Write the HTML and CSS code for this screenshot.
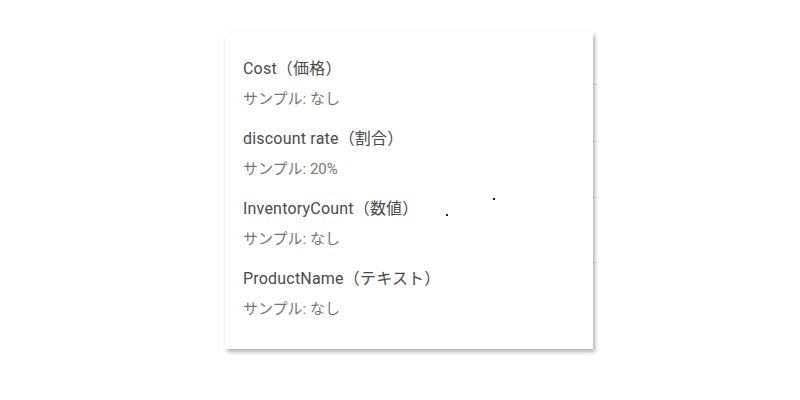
FILE: index.html
```html
<!DOCTYPE html>
<html lang="ja">
<head>
<meta charset="utf-8">
<link rel="stylesheet" href="styles.css">
</head>
<body>
<div class="page">
  <div class="bg-list">
    <div class="bg-row r1"></div>
    <div class="bg-row r2"></div>
    <div class="bg-row r3"></div>
    <div class="bg-row r4"></div>
  </div>
  <div class="menu">
    <div class="item">
      <div class="title">Cost（価格）</div>
      <div class="sub">サンプル: なし</div>
    </div>
    <div class="item">
      <div class="title">discount rate（割合）</div>
      <div class="sub">サンプル: 20%</div>
    </div>
    <div class="item">
      <div class="title">InventoryCount（数値）</div>
      <div class="sub">サンプル: なし</div>
    </div>
    <div class="item">
      <div class="title">ProductName（テキスト）</div>
      <div class="sub">サンプル: なし</div>
    </div>
    <span class="speck s1"></span>
    <span class="speck s2"></span>
  </div>
</div>
</body>
</html>
```

FILE: styles.css
```css
* { box-sizing: border-box; }
html, body {
  margin: 0;
  padding: 0;
  background: #ffffff;
  font-family: Roboto, "Noto Sans CJK JP", sans-serif;
}
.page {
  position: relative;
  width: 800px;
  height: 400px;
  padding-top: 32px;
}
.bg-list {
  margin-left: 250px;
  width: 347px;
}
.bg-row { border-bottom: 1px solid #e0e0e0; }
.r1 { height: 53px; }
.r2 { height: 57px; }
.r3 { height: 56px; }
.r4 { height: 65px; }
.menu {
  position: absolute;
  top: 32px;
  left: 225px;
  width: 368px;
  padding: 16px 18px 21px;
  background: #ffffff;
  box-shadow: 2px 3px 4px rgba(0, 0, 0, 0.3);
}
.item {
  padding: 9px 0;
}
.title {
  font-size: 16px;
  line-height: 24px;
  letter-spacing: 0.2px;
  color: #4a4a4a;
  white-space: nowrap;
}
.sub {
  margin-top: 8px;
  font-size: 15px;
  line-height: 20px;
  color: #767676;
  white-space: nowrap;
}
.speck {
  position: absolute;
  width: 2px;
  height: 2px;
  background: #222;
}
.s1 { left: 221px; top: 182px; }
.s2 { left: 268px; top: 166px; }
```
